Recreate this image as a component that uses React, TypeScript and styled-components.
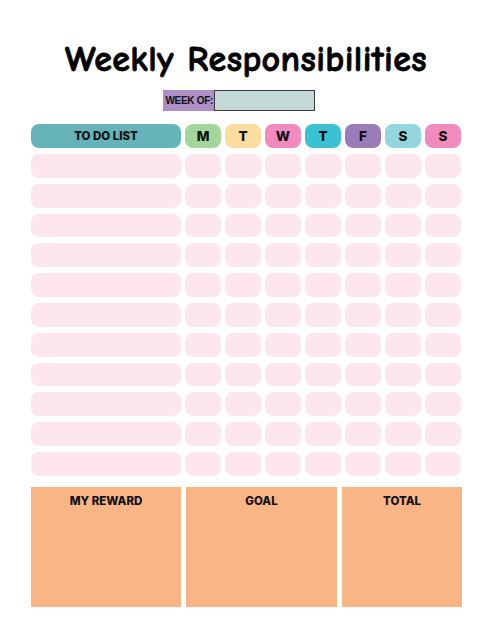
import React from "react";
import styled, { createGlobalStyle } from "styled-components";

const GlobalStyle = createGlobalStyle`
  html, body {
    margin: 0;
    padding: 0;
    background: #ffffff;
  }
  body {
    font-family: "Inter", "Liberation Sans", Arial, sans-serif;
  }
`;

const Page = styled.div`
  width: 491px;
  height: 639px;
  padding: 0 30px 0 31px;
  box-sizing: border-box;
  display: flex;
  flex-direction: column;
`;

const Title = styled.h1`
  margin: 38px 0 0;
  text-align: center;
  font-family: "Comic Sans MS", "Comic Neue", "DejaVu Sans", sans-serif;
  font-weight: 700;
  font-size: 36px;
  line-height: 44px;
  color: #000;
  letter-spacing: 0.4px;
  -webkit-text-stroke: 0.8px #000;
`;

const WeekRow = styled.div`
  display: flex;
  justify-content: center;
  margin-top: 8px;
  padding-right: 14px;
`;

const WeekLabel = styled.div`
  width: 51px;
  height: 21px;
  background: #ad8fc6;
  display: flex;
  align-items: center;
  justify-content: flex-end;
  padding-right: 1px;
  box-sizing: border-box;
  font-family: "Liberation Sans", Arial, sans-serif;
  font-weight: 700;
  font-size: 10px;
  letter-spacing: -0.3px;
  color: #111;
`;

const WeekInput = styled.div`
  width: 101px;
  height: 21px;
  box-sizing: border-box;
  background: #c5dad8;
  border: 1.5px solid #3a3a3a;
`;

const Grid = styled.div`
  margin-top: 13px;
  display: grid;
  grid-template-columns: 150px repeat(7, 36px);
  column-gap: 4px;
  row-gap: 6px;
`;

const HeaderCell = styled.div<{ $bg: string; $small?: boolean }>`
  height: 24px;
  border-radius: 8px;
  background: ${(p) => p.$bg};
  display: flex;
  align-items: center;
  justify-content: center;
  font-weight: 800;
  font-size: ${(p) => (p.$small ? "11.5px" : "13.5px")};
  color: #111;
`;

const Cell = styled.div`
  height: 23.8px;
  border-radius: 8px;
  background: #fde6ee;
`;

const Bottom = styled.div`
  margin-top: 11px;
  display: grid;
  grid-template-columns: 150px 151px 120px;
  column-gap: 5px;
`;

const Box = styled.div`
  height: 120px;
  background: #f9b586;
  padding-top: 7px;
  box-sizing: border-box;
  text-align: center;
  font-weight: 800;
  font-size: 11.5px;
  color: #111;
`;

const days = [
  { d: "M", c: "#a4d59a" },
  { d: "T", c: "#fddca0" },
  { d: "W", c: "#f28bbd" },
  { d: "T", c: "#3bc2d2" },
  { d: "F", c: "#9a7cb9" },
  { d: "S", c: "#94d6dd" },
  { d: "S", c: "#f28bbd" },
];

const rows = Array.from({ length: 11 });

export default function App() {
  return (
    <>
      <GlobalStyle />
      <Page>
        <Title>Weekly Responsibilities</Title>
        <WeekRow>
          <WeekLabel>WEEK OF:</WeekLabel>
          <WeekInput />
        </WeekRow>
        <Grid>
          <HeaderCell $bg="#66b3ba" $small>
            TO DO LIST
          </HeaderCell>
          {days.map((x, i) => (
            <HeaderCell key={i} $bg={x.c}>
              {x.d}
            </HeaderCell>
          ))}
          {rows.map((_, r) => (
            <React.Fragment key={r}>
              <Cell />
              {days.map((_, i) => (
                <Cell key={i} />
              ))}
            </React.Fragment>
          ))}
        </Grid>
        <Bottom>
          <Box>MY REWARD</Box>
          <Box>GOAL</Box>
          <Box>TOTAL</Box>
        </Bottom>
      </Page>
    </>
  );
}
